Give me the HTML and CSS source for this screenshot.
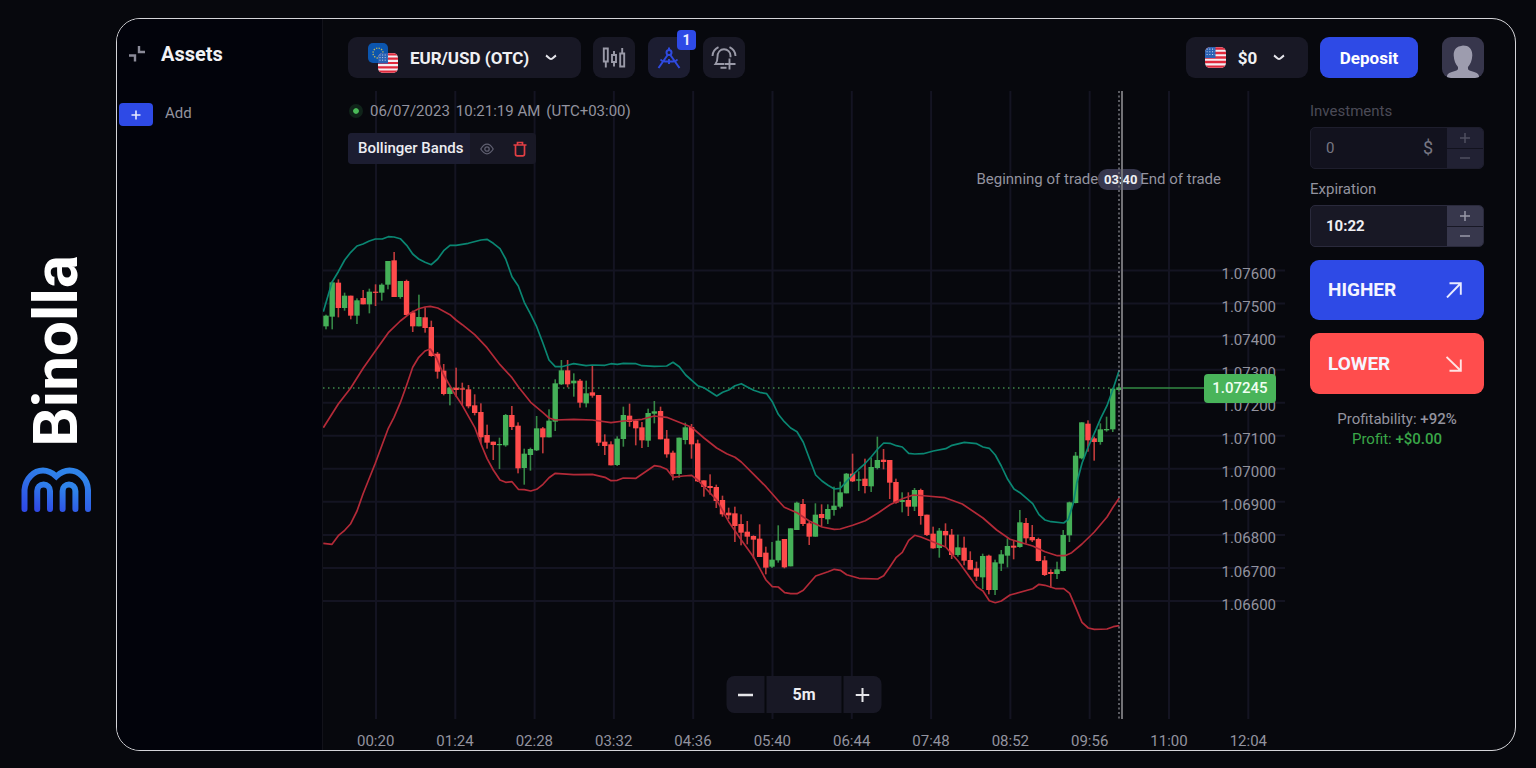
FILE: index.html
```html
<!DOCTYPE html>
<html lang="en">
<head>
<meta charset="utf-8">
<title>Binolla</title>
<link rel="stylesheet" href="styles.css">
</head>
<body>
<svg class="defs" aria-hidden="true">
  <defs>
    <linearGradient id="brand" x1="0" y1="1" x2="0.5" y2="0"><stop offset="0" stop-color="#2f4ae6"/><stop offset="1" stop-color="#2f84ea"/></linearGradient>
    <clipPath id="flagClip"><rect width="20" height="20" rx="5"/></clipPath>
    <symbol id="us" viewBox="0 0 20 20">
      <g clip-path="url(#flagClip)">
        <rect width="20" height="20" fill="#f3eef2"/>
        <path d="M0 1.4h20M0 5.7h20M0 10h20M0 14.3h20M0 18.6h20" stroke="#e0293c" stroke-width="2.2"/>
        <rect width="10" height="10.5" fill="#2a62b4"/>
        <path d="M1.5 2h8M1.5 4.6h8M1.5 7.2h8" stroke="#c3d3ee" stroke-width="1" stroke-dasharray="1 1.6"/>
      </g>
    </symbol>
  </defs>
</svg>
<aside class="brand">
  <span class="brand-name">Binolla</span>
  <svg class="brand-mark" viewBox="0 0 71 46" fill="none" stroke="url(#brand)" stroke-width="6" stroke-linecap="round" aria-hidden="true">
    <path d="M3.500 42V23C4.500 11 13 3.600 22 3.600c5 0 9 2 13.300 5.800C39.500 5.600 43.500 3.600 48.500 3.600 57.500 3.600 66.500 11 67 23v19"/>
    <path d="M16.200 42V24a6.400 6.400 0 0 1 12.800 0v18M41.600 42V24a6.400 6.400 0 0 1 12.800 0v18"/>
  </svg>
</aside>
<div class="frame">
  <nav class="sidebar">
    <div class="side-title">
      <svg width="18" height="18" viewBox="0 0 18 18" fill="none" stroke="#8b8b99" stroke-width="2.400" aria-hidden="true"><path d="M11 1v6h6M1 10.500h6v6"/></svg>
      <h1>Assets</h1>
    </div>
    <div class="side-add">
      <button class="add-btn" id="add" aria-label="Add asset"><svg width="10" height="10" viewBox="0 0 10 10" stroke="#e8eaff" stroke-width="1.600"><path d="M5 0.500v9M0.500 5h9"/></svg></button>
      <label for="add">Add</label>
    </div>
  </nav>
  <main class="main">
    <header class="top">
      <button class="pair">
        <svg width="30" height="30" viewBox="0 0 30 30" aria-hidden="true">
          <rect width="20" height="20" rx="5" fill="#0b55ae"/>
          <circle cx="10" cy="10" r="5" fill="none" stroke="#c2b85a" stroke-width="1.300" stroke-dasharray="1.300 1.320"/>
          <use href="#us" x="10" y="10" width="20" height="20"/>
        </svg>
        <span>EUR/USD (OTC)</span>
        <svg width="12" height="7" viewBox="0 0 12 7" fill="none" stroke="#e4e4ea" stroke-width="2"><path d="M1 1.500c2.500 1.300 3 3.500 5 3.500s2.500-2.200 5-3.500"/></svg>
      </button>
      <button class="tool" aria-label="Chart type">
        <svg width="24" height="22" viewBox="0 0 24 22" fill="none" stroke="#9a9aa8" stroke-width="1.900"><path d="M1.800 1.500h4v13h-4zM3.800 14.500v6M12 4v4M10 8h4v7h-4zM12 15v4.500M18.200 6.500h4v13h-4zM20.200 1v5.500"/></svg>
      </button>
      <button class="tool active" aria-label="Indicators">
        <svg width="24" height="22" viewBox="0 0 24 22" fill="none" stroke="#2f4ae0" stroke-width="2"><circle cx="12" cy="5.500" r="2.500"/><path d="M12 0.500v2.500M10.800 7.700L1.500 21M13.200 7.700L22.500 21M3.500 12.500c1 1.300 2.500 1.900 4.500 2.100h8c2-.2 3.500-.8 4.500-2.100M12 12v5"/></svg>
        <span class="badge">1</span>
      </button>
      <button class="tool" aria-label="Alerts">
        <svg width="26" height="24" viewBox="0 0 26 24" fill="none" stroke="#9a9aa8" stroke-width="1.900"><path d="M13 18H4.500c1.500-2 2-3.500 2-7 0-5 2.800-7.700 6.500-7.700s6.500 2.700 6.500 6.500v1.500M9.500 21.800h6M1.500 10C1.700 6 3.700 3 7.500 1.200M24.500 10c-.2-4-2.200-7-6-8.800M18.500 12.500v11M13.500 18h11"/></svg>
      </button>
      <span class="grow"></span>
      <button class="balance">
        <svg width="21" height="21" viewBox="0 0 20 20" aria-hidden="true"><use href="#us" width="20" height="20"/></svg>
        <span>$0</span>
        <svg width="12" height="7" viewBox="0 0 12 7" fill="none" stroke="#e4e4ea" stroke-width="2"><path d="M1 1.500c2.500 1.300 3 3.500 5 3.500s2.500-2.200 5-3.500"/></svg>
      </button>
      <button class="deposit">Deposit</button>
      <button class="avatar" aria-label="Profile">
        <svg width="42" height="42" viewBox="0 0 42 42" fill="#9d9cae"><path d="M21 8.500c6 0 9.500 3.500 9.300 10-.2 5-2 9-4.300 11.500-.3 2.500.5 3.200 3 4 4.500 1.300 8 2.500 8 5.500 0 2-1 2.500-2.500 2.500H7.500C6 42 5 41.500 5 39.500c0-3 3.500-4.200 8-5.500 2.500-.8 3.300-1.500 3-4-2.300-2.500-4.100-6.500-4.300-11.500-.2-5 2.300-8.500 6.300-9.200z"/></svg>
      </button>
    </header>
    <div class="content">
      <section class="chart">
        <div class="plot">
          <svg class="canvas" viewBox="323 91 962 628" preserveAspectRatio="none" role="img" aria-label="EUR/USD candles with Bollinger Bands">
            <g id="grid" stroke="#141422" stroke-width="2"></g>
            <path d="M323 388H1119" stroke="#3f8a4c" stroke-width="1.500" stroke-dasharray="1.500 3.500" fill="none"/>
            <g id="candles"></g>
            <g id="bands" fill="none" stroke-width="1.700" stroke-linejoin="round"></g>
            <path d="M1121 388H1206" stroke="#338a43" stroke-width="1.400"/>
          </svg>
          <ul class="prices">
            <li>1.07600</li><li>1.07500</li><li>1.07400</li><li>1.07300</li><li>1.07200</li><li>1.07100</li><li>1.07000</li><li>1.06900</li><li>1.06800</li><li>1.06700</li><li>1.06600</li>
          </ul>
          <span class="price-tag">1.07245</span>
          <div class="trade-marks"><span>Beginning of trade</span><b>03:40</b><span>End of trade</span></div>
          <svg class="canvas" viewBox="323 91 962 628" preserveAspectRatio="none" aria-hidden="true">
            <path d="M1119 91V719" stroke="#77777e" stroke-width="1.500" stroke-dasharray="2 2.500"/>
            <path d="M1122 91V719" stroke="#727276" stroke-width="2"/>
          </svg>
          <div class="info">
            <p class="clock"><i class="dot"></i><span>06/07/2023</span><span>10:21:19 AM</span><span>(UTC+03:00)</span></p>
            <div class="chip">
              <span>Bollinger Bands</span>
              <button aria-label="Hide"><svg width="14" height="12" viewBox="0 0 14 12" fill="none" stroke="#5f5f70" stroke-width="1.300"><path d="M0.800 6C3 2.300 5 1.200 7 1.200S11 2.300 13.200 6C11 9.700 9 10.800 7 10.800S3 9.700 0.800 6z"/><circle cx="7" cy="6" r="2.200"/></svg></button>
              <button aria-label="Remove"><svg width="14" height="16" viewBox="0 0 14 16" fill="none" stroke="#e23f44" stroke-width="1.700"><path d="M0.500 4h13M4.500 4V1.500h5V4M2.500 4v9c0 1.300.6 1.900 1.800 1.900h5.400c1.200 0 1.800-.6 1.800-1.900V4"/></svg></button>
            </div>
          </div>
          <div class="scale">
            <button aria-label="Zoom out"><svg width="16" height="16" viewBox="0 0 16 16" stroke="#e6e6ea" stroke-width="2.400"><path d="M0.500 8h15"/></svg></button>
            <button class="step">5m</button>
            <button aria-label="Zoom in"><svg width="14" height="14" viewBox="0 0 14 14" stroke="#e6e6ea" stroke-width="2"><path d="M7 0v14M0 7h14"/></svg></button>
          </div>
        </div>
        <ol class="times">
          <li>00:20</li><li>01:24</li><li>02:28</li><li>03:32</li><li>04:36</li><li>05:40</li><li>06:44</li><li>07:48</li><li>08:52</li><li>09:56</li><li>11:00</li><li>12:04</li>
        </ol>
      </section>
      <form class="trade">
        <label class="dim" for="amount">Investments</label>
        <div class="field off">
          <input id="amount" type="text" value="0">
          <span class="unit">$</span>
          <div class="spin">
            <button type="button" aria-label="Increase amount"><svg width="10" height="10" viewBox="0 0 10 10" stroke="currentColor" stroke-width="1.500"><path d="M5 0v10M0 5h10"/></svg></button>
            <button type="button" aria-label="Decrease amount"><svg width="10" height="10" viewBox="0 0 10 10" stroke="currentColor" stroke-width="1.500"><path d="M0 5h10"/></svg></button>
          </div>
        </div>
        <label for="expiry">Expiration</label>
        <div class="field">
          <input id="expiry" type="text" value="10:22">
          <div class="spin">
            <button type="button" aria-label="Later"><svg width="10" height="10" viewBox="0 0 10 10" stroke="currentColor" stroke-width="1.500"><path d="M5 0v10M0 5h10"/></svg></button>
            <button type="button" aria-label="Earlier"><svg width="10" height="10" viewBox="0 0 10 10" stroke="currentColor" stroke-width="1.500"><path d="M0 5h10"/></svg></button>
          </div>
        </div>
        <button type="button" class="order higher">HIGHER<svg width="16" height="16" viewBox="0 0 16 16" fill="none" stroke="#e9ebff" stroke-width="1.900"><path d="M1 15.500L14.500 1.500M3.500 1.200h11.300v11.500"/></svg></button>
        <button type="button" class="order lower">LOWER<svg width="16" height="16" viewBox="0 0 16 16" fill="none" stroke="#ffe4e4" stroke-width="1.900"><path d="M0.500 1L14.500 14.500M14.800 3.500v11.300H3.500"/></svg></button>
        <p class="result">Profitability: <b>+92%</b><br><span>Profit: <b>+$0.00</b></span></p>
      </form>
    </div>
  </main>
</div>
<script src="chart.js"></script>
</body>
</html>
```
FILE: styles.css
```css
* { box-sizing: border-box; }
body {
  margin: 0;
  min-height: 100vh;
  display: flex;
  background: #07080d;
  color: #93939f;
  font: 15px/20px Roboto, "Liberation Sans", sans-serif;
}
button, input { font: inherit; color: inherit; border: 0; padding: 0; margin: 0; }
button { display: flex; align-items: center; justify-content: center; cursor: pointer; background: #181825; }
h1, p, ul, ol { margin: 0; padding: 0; list-style: none; }
svg { display: block; flex: none; }
.defs { position: absolute; width: 0; height: 0; }
.grow { flex: 1; }

.brand {
  width: 116px;
  flex: none;
  display: flex;
  flex-direction: column;
  align-items: center;
  justify-content: center;
  gap: 20px;
  padding-right: 4px;
}
.brand-name {
  writing-mode: vertical-rl;
  rotate: 180deg;
  font-size: 62px;
  line-height: 66px;
  font-weight: 700;
  color: #fff;
}
.brand-mark { width: 71px; height: 46px; }

.frame {
  flex: 1;
  display: flex;
  margin: 18px 20px 17px 0;
  border: 1px solid #d4d4d8;
  border-radius: 24px;
  overflow: hidden;
}
.sidebar { width: 206px; flex: none; background: #02030b; border-right: 1px solid #12121a; padding: 24px 2px; }
.side-title { display: flex; align-items: center; gap: 15px; padding-left: 9px; height: 22px; }
.side-title h1 { font-size: 20px; line-height: 22px; font-weight: 700; color: #f2f2f5; }
.side-add { display: flex; align-items: center; gap: 12px; margin-top: 38px; }
.side-add label { padding-bottom: 3px; }
.add-btn { width: 34px; height: 23px; border-radius: 4px; background: #2e4ae6; }

.main { flex: 1; min-width: 0; display: flex; flex-direction: column; }
.top { display: flex; padding: 18px 31px 12px 25px; height: 72px; gap: 12px; color: #f0f0f3; }
.top button { height: 41px; border-radius: 9px; }
.top .pair { width: 233px; gap: 12px; padding-right: 4px; font-size: 17px; font-weight: 700; }
.pair svg:last-child { margin-left: 4px; }
.tool { width: 42px; margin-right: 1px; position: relative; }
.badge {
  position: absolute;
  right: -6px;
  top: -7px;
  width: 19px;
  height: 20px;
  border-radius: 4px;
  background: #2e4ae6;
  color: #eef;
  font-size: 14px;
  font-weight: 700;
}
.tool.active { background: #1c1d31; }
.balance { width: 122px; gap: 12px; font-size: 17px; font-weight: 700; }
.top .balance { padding-right: 4px; }
.balance svg:last-child { margin-left: 4px; }
.deposit { width: 98px; font-size: 17px; font-weight: 700; background: #2e4ae6; color: #fff; }
.top .avatar { width: 42px; margin-left: 12px; background: #37364c; overflow: hidden; }

.content { flex: 1; display: flex; }
.chart { flex: 1; min-width: 0; display: flex; flex-direction: column; }
.plot { flex: 1; position: relative; }
.canvas { position: absolute; inset: 0; width: 100%; height: 100%; }
.prices {
  position: absolute;
  right: 9px;
  top: 166px;
  height: 58%;
  display: flex;
  flex-direction: column;
  justify-content: space-around;
}
.price-tag {
  position: absolute;
  right: 9px;
  top: 45%;
  width: 72px;
  line-height: 29px;
  border-radius: 4px;
  background: #49b45a;
  color: #f0fff2;
  font-weight: 500;
  text-align: center;
}
.trade-marks { position: absolute; right: 64px; top: 77px; display: flex; align-items: center; line-height: 22px; }
.trade-marks b {
  width: 45px;
  margin-right: -3px;
  line-height: 21px;
  border-radius: 9px;
  background: #37374e;
  color: #f0f0f4;
  font-size: 13px;
  text-align: center;
}
.info { position: absolute; left: 25px; top: 10px; }
.clock { display: flex; align-items: center; gap: 6px; }
.dot { width: 6px; height: 6px; margin: 0 5px; border-radius: 50%; background: #4aba58; outline: 4px solid #10241a; }
.chip { display: inline-flex; margin-top: 12px; height: 31px; border-radius: 4px; overflow: hidden; background: #181825; }
.chip span { padding: 5px 7px 0 10px; background: #1c1d31; color: #ededf2; font-weight: 500; }
.chip button { width: 33px; }
.scale { position: absolute; left: 50%; bottom: 6px; translate: -50% 0; display: flex; gap: 2px; }
.scale button { width: 38px; height: 37px; border-radius: 8px 0 0 8px; }
.scale button:last-child { border-radius: 0 8px 8px 0; }
.scale .step { width: 75px; border-radius: 0; color: #ededf2; font-size: 16px; font-weight: 700; }
.times { display: grid; grid-template-columns: repeat(12, 1fr); margin: 0 -3px 0 13px; padding-top: 14px; line-height: 17px; text-align: center; }

.trade { width: 230px; flex: none; padding: 10px 31px 0 25px; display: flex; flex-direction: column; }
.trade .dim { color: #4b4b57; }
.field {
  display: flex;
  align-items: center;
  height: 42px;
  margin: 6px 0 10px;
  border: 1px solid #2a2a3c;
  border-radius: 5px;
  background: #181825;
  color: #f0f0f3;
  overflow: hidden;
}
.field input { flex: 1; min-width: 0; padding-left: 15px; background: none; font-size: 15px; font-weight: 700; outline: 0; }
.field.off { background: #12121e; border-color: #1e1e2d; color: #777783; }
.field.off input { font-weight: 400; }
.unit { padding-right: 14px; font-size: 18px; }
.spin { width: 36px; height: 100%; display: flex; flex-direction: column; gap: 1px; color: #9a9aa8; }
.spin button { flex: 1; background: #37374c; }
.off .spin { color: #4f4f60; }
.off .spin button { background: #212133; }
.order {
  justify-content: space-between;
  height: 60px;
  margin-top: 3px;
  padding: 0 22px 0 18px;
  border-radius: 9px;
  color: #f5f5ff;
  font-size: 19px;
  font-weight: 700;
}
.higher { background: #2e4ae6; }
.lower { background: #ff4d4d; margin-top: 13px; height: 61px; }
.result { margin-top: 15px; text-align: center; }
.result b { font-weight: 500; }
.result span { color: #3aa648; }
```
FILE: chart.js
```js
// Each row is: colour, body top, body bottom, wick top, wick bottom (a third of a unit each).
const START = 326, STEP = 6.195, BASE = 220;
const blocks = [
  [0, `G 287 319 284 328|G 187 290 184 328|R 188 264 178 292|G 227 264 218 272|R 227 287 227 298|G 241 287 235 312|R 234 253 210 253|G 215 253 206 280|R 215 217 193 258|G 194 218 190 242|G 123 194 123 208|R 121 231 96 231|G 183 231 183 236|R 183 285 179 287|R 277 319 272 336|G 291 319 224 319|R 292 324 262 338|R 321 408 302 410|R 401 455 396 476|R 452 522 432 526|G 503 522 500 556|R 503 510 443 530|R 505 509 488 556|R 508 559 495 565|R 556 579 523 586|R 576 652 550 672|R 645 668 614 686|R 665 675 665 720|G 672 675 653 747|G 585 676 582 680|R 585 621 558 630|R 617 745 607 760|G 701 744 686 794|G 687 705 683 752|G 625 691 588 693|R 625 652 621 700|G 602 652 568 652|G 490 605 478 633|G 451 493 420 495|R 451 493 420 502|G 482 490 460 530`],
  [360, `R 122 188 117 203|G 160 190 122 202|R 157 167 78 173|R 165 308 165 318|R 305 318 283 345|R 313 376 304 376|G 296 375 289 378|G 225 297 200 320|R 227 246 191 260|R 242 265 238 316|R 262 301 246 324|G 219 302 206 321|G 214 221 183 250|R 213 298 200 298|R 296 343 270 353|R 338 402 332 421|G 293 402 293 414|G 262 300 248 313|R 261 313 252 356|R 310 424 299 426|R 421 441 421 470|R 438 444 403 464|R 441 483 434 504|R 480 523 467 530|R 518 526 503 538|R 520 558 500 606|R 552 578 523 616|R 575 590 543 613|R 588 599 586 655|R 596 651 553 651|R 638 683 620 703|G 659 680 606 684|G 602 661 556 668|R 597 682 597 685|G 565 679 565 679|G 488 570 485 570`],
  [570, `R 282 342 267 348|R 340 380 335 405|G 314 380 280 380|R 312 324 283 350|G 297 328 283 342|G 287 300 230 317|G 247 290 215 295|G 191 250 189 250|R 191 214 131 216|G 208 212 184 243|R 206 228 146 250|G 171 229 143 246|G 150 174 80 178|R 149 156 117 178|R 150 218 150 267|R 216 278 206 281|G 270 276 247 307|R 270 290 247 318|G 240 290 234 303|R 240 318 236 344|R 314 375 314 378|R 371 415 350 416|G 362 414 354 443|R 363 376 340 410|R 374 435 357 447|G 412 435 374 440|R 413 452 380 466|R 450 479 424 479|R 475 500 455 513|G 438 502 431 537|R 437 540 434 553|G 457 540 449 555`],
  [420, `G 583 611 570 633|G 558 587 535 622|R 557 563 542 598|G 487 561 450 563|R 489 535 474 550|R 531 541 495 546|R 537 603 533 604|R 601 645 588 648|R 636 642 628 684|G 628 642 605 657|G 525 633 510 634|G 427 526 425 546|G 287 429 276 430|G 187 295 187 298|R 191 241 181 275|R 235 246 230 302|G 208 246 190 254|G 207 211 170 215|G 86 208 83 216|G 82 90 70 95`],
];
const NS = 'http://www.w3.org/2000/svg';
function draw(parent, name, attrs) {
  const el = document.createElementNS(NS, name);
  for (const key in attrs) el.setAttribute(key, attrs[key]);
  document.getElementById(parent).append(el);
}

const columns = Array.from({ length: 12 }, (_, i) => `M${376 + 79.3 * i} 91V719`).join('');
const rows = Array.from({ length: 11 }, (_, i) => `M323 ${270.5 + 33.05 * i}H1285`).join('');
draw('grid', 'path', { d: columns + rows });

let index = 0;
for (const [shift, text] of blocks) {
  for (const row of text.split('|')) {
    const [kind, ...raw] = row.split(' ');
    const [top, bottom, high, low] = raw.map(v => BASE + (Number(v) + shift) / 3);
    const x = START + STEP * index++;
    const fill = kind === 'G' ? '#45b058' : '#ff4b4b';
    draw('candles', 'rect', { x: x - 0.8, y: high, width: 1.6, height: low - high, fill, opacity: 0.75 });
    draw('candles', 'rect', { x: x - 2.7, y: top, width: 5.4, height: Math.max(1.2, bottom - top), fill });
  }
}

// Band vertices, grouped by the left edge and vertical shift that they are measured from.
const bands = [
  ['#0a8672', [
    [320, 0, '10,275 36,187 55,155 74,120 92,97 111,78 129,72 148,63 166,57 187,57 205,50 222,51 241,56 260,76 278,102 296,117 315,127 334,134 353,117 371,92 390,76 408,76 445,70 483,60 501,58 520,70 540,86 557,117 576,170 595,198 613,247 632,283 650,320 669,370 687,420 706,440 725,440'],
    [540, 360, '85,75 101,71 138,77 157,75 195,76 213,71 232,73 250,70 288,71 306,77 343,79 380,78 399,67 418,80 437,105 473,137 492,143 530,168 548,157 566,150 585,137 604,131 622,141 641,151 659,157 680,161 697,185'],
    [740, 570, '115,13 133,35 152,54 171,65 190,97 208,145 227,195 246,213 264,226 283,237 301,235 320,214 338,195 357,177 376,160 394,140 413,117 431,99 450,100 469,107 487,111 506,130 524,132 550,131 580,123 617,116 636,106 673,97 710,101 729,111 748,115'],
    [930, 420, '196,285 214,318 233,358 252,387 270,398 308,431 327,464 345,480 363,485 401,489 415,478 430,430 440,370 456,310 475,260 493,220 512,175 531,137 550,85 568,30'],
  ]],
  ['#b32a38', [
    [320, 0, '10,623 55,552 92,504 130,444 166,393 205,338 241,303 270,280 296,266 315,261 331,259 353,264 390,284 408,300 427,314 464,344 501,383 540,434 576,473 595,500 632,547 669,578 687,594 706,600'],
    [540, 360, '101,238 157,240 213,248 250,243 306,238 343,228 380,232 455,262 492,294 530,324 560,341 585,352 604,366 641,403 678,440 715,482'],
    [740, 570, '133,292 171,308 208,333 246,351 283,358 301,357 338,346 376,332 413,310 450,284 487,266 520,255 560,258'],
    [930, 420, '45,413 97,432 159,474 200,510 240,538 308,558 345,575 382,587 405,587 425,578 456,552 493,516 531,471 550,440 568,414'],
  ]],
  ['#b32a38', [
    [320, 0, '10,970 36,973 55,947 74,931 92,911 111,873 129,822 166,730 205,625 222,592 241,548 260,495 278,442 296,412 315,393 331,387 350,415 371,465 400,515 427,556 464,622 483,672 501,715 520,750 540,780 557,787 576,785 595,808 613,809 632,813 650,808 669,793 687,773 706,760'],
    [540, 360, '101,404 157,403 195,412 213,422 232,421 250,414 288,415 343,377 362,380 380,388 399,412 430,408 455,406 473,420 530,480 566,545 604,600 641,652 678,720 697,740 715,741 734,758 752,761'],
    [740, 570, '171,551 190,541 227,498 264,485 283,478 301,481 320,494 357,505 413,507 431,497 450,470 469,442 487,427 506,391 524,376 543,381 617,411 655,454 710,530 729,543 748,572'],
    [930, 420, '196,728 214,723 240,705 308,686 327,673 345,676 378,686 401,686 419,700 437,742 456,787 475,804 493,808 531,807 550,800 568,797'],
  ]],
];
for (const [stroke, parts] of bands) {
  const points = parts.flatMap(([left, shift, list]) => list.split(' ').map(pair => {
    const [x, y] = pair.split(',').map(Number);
    return `${(left + x / 3).toFixed(1)},${(BASE + (y + shift) / 3).toFixed(1)}`;
  }));
  draw('bands', 'polyline', { points: points.join(' '), stroke });
}
```
